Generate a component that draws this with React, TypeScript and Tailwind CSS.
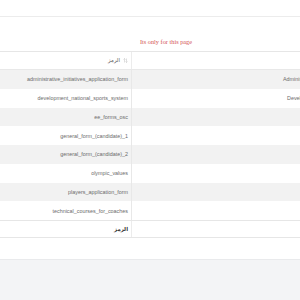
import * as React from "react";

type FormRow = {
  code: string;
  name: string;
  nameClass: string;
};

const rows: FormRow[] = [
  {
    code: "administrative_initiatives_application_form",
    name: "Administrative Initiatives Application Form",
    nameClass: "pl-[151px]",
  },
  {
    code: "development_national_sports_system",
    name: "Development National Sports System",
    nameClass: "pl-[155px]",
  },
  { code: "ee_forms_osc", name: "", nameClass: "" },
  { code: "general_form_(candidate)_1", name: "", nameClass: "" },
  { code: "general_form_(candidate)_2", name: "", nameClass: "" },
  { code: "olympic_values", name: "", nameClass: "" },
  { code: "players_application_form", name: "", nameClass: "" },
  { code: "technical_courses_for_coaches", name: "", nameClass: "" },
];

function SortIcon() {
  return (
    <svg width="5" height="5" viewBox="0 0 10 10" className="ml-[3px] text-[#bcbcbc]">
      <path d="M3 9V1M1 3l2-2 2 2" fill="none" stroke="currentColor" strokeWidth="1" />
      <path d="M7 1v8M5 7l2 2 2-2" fill="none" stroke="currentColor" strokeWidth="1" />
    </svg>
  );
}

export default function App() {
  return (
    <div className="h-[300px] w-[300px] overflow-hidden bg-white font-['Liberation_Sans','DejaVu_Sans',sans-serif]">
      <div className="h-[17px] border-b border-[#ececec]" />

      <div className="flex h-[35px] items-center justify-center border-b border-[#e6e6e6] pt-[16px] pl-[32px]">
        <span className="font-['Liberation_Serif',serif] text-[6.3px] text-[#d45454]">
          Its only for this page
        </span>
      </div>

      <div className="flex h-[18px] border-b border-[#e8e8e8]">
        <div className="flex w-[132px] items-center justify-end border-r border-[#ececec] pr-[3px] text-[5.4px] text-[#555]">
          <span className="font-['DejaVu_Sans',sans-serif]">الرمز</span>
          <SortIcon />
        </div>
        <div className="flex-1" />
      </div>

      {rows.map((row, i) => (
        <div
          key={row.code}
          className={
            i % 2 === 0
              ? "flex h-[18.75px] bg-[#f2f2f2] text-[5.4px] text-[#6b6b6b]"
              : "flex h-[18.75px] bg-white text-[5.4px] text-[#6b6b6b]"
          }
        >
          <div className="flex w-[132px] items-center justify-end whitespace-nowrap border-r border-[#e8e8e8] pr-[3px]">
            {row.code}
          </div>
          <div className={`flex flex-1 items-center overflow-hidden whitespace-nowrap ${row.nameClass}`}>
            {row.name}
          </div>
        </div>
      ))}

      <div className="flex h-[18px] border-y border-[#e6e6e6]">
        <div className="flex w-[132px] items-center justify-end border-r border-[#ececec] pr-[3px] text-[5.4px] font-bold text-[#333]">
          <span className="font-['DejaVu_Sans',sans-serif]">الرمز</span>
        </div>
        <div className="flex-1" />
      </div>

      <div className="h-[22px] border-b border-[#e9eaec]" />
      <div className="h-[40px] bg-[#f3f4f6]" />
    </div>
  );
}
